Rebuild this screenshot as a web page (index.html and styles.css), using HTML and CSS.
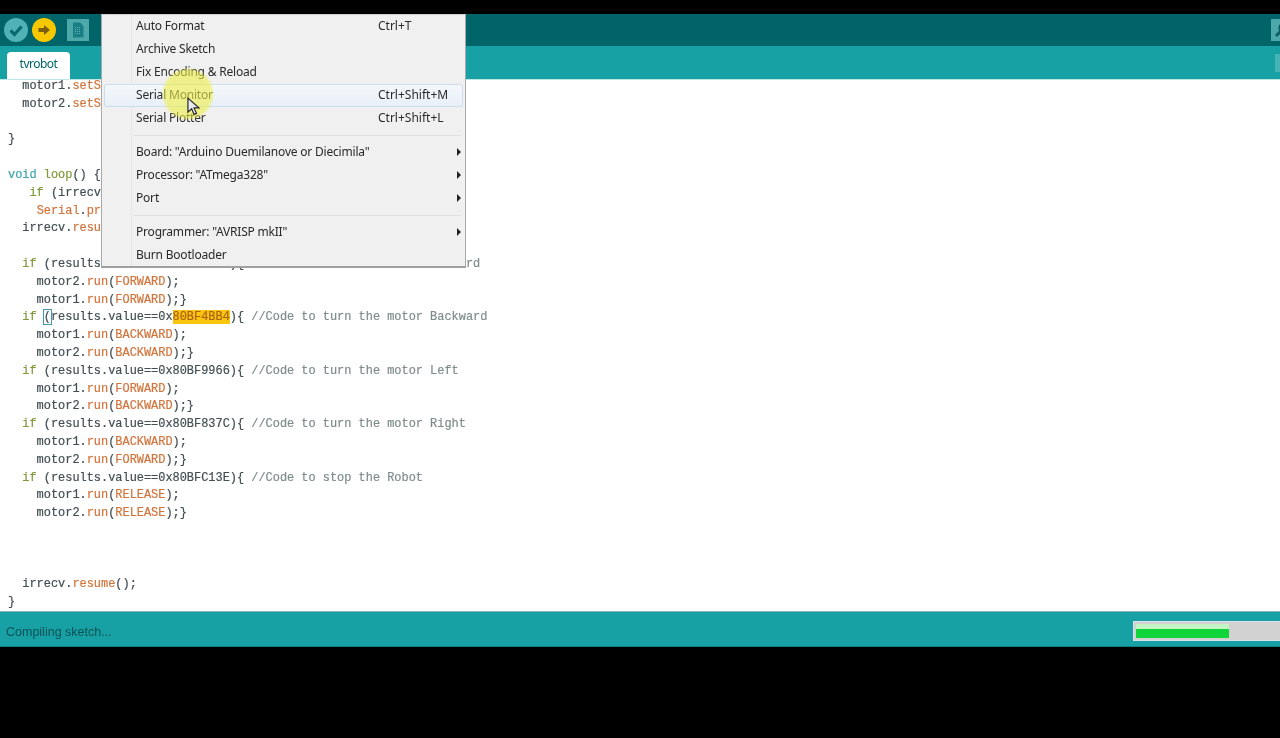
FILE: index.html
```html
<!DOCTYPE html>
<html lang="en">
<head>
<meta charset="utf-8">
<title>tvrobot | Arduino</title>
<link rel="stylesheet" href="styles.css">
</head>
<body>
<div class="app">
  <header class="toolbar">
    <div class="tools">
      <button class="round verify" aria-label="Verify"><svg viewBox="0 0 24 24" width="24" height="24"><path d="M6.5 12.5l4 4 7-8" fill="none" stroke="#0b6a70" stroke-width="3.2"/></svg></button>
      <button class="round upload" aria-label="Upload"><svg viewBox="0 0 24 24" width="24" height="24"><path d="M6.5 10h5.5V7l6 5-6 5v-3H6.5z" fill="#7a5f10"/></svg></button>
      <button class="square new" aria-label="New"><svg viewBox="0 0 22 22" width="22" height="22"><path d="M6 3.5h7l3.5 3.5v11.5H6z" fill="#1a7f84"/><path d="M8 8.5h6M8 10.5h6M8 12.5h6M8 14.5h6" stroke="#5fb0b2" stroke-width="1" stroke-dasharray="1 1"/></svg></button>
    </div>
    <button class="square monitor" aria-label="Serial Monitor"><svg viewBox="0 0 22 22" width="22" height="22"><circle cx="13" cy="9" r="4.5" fill="none" stroke="#0b5f63" stroke-width="2.4"/><path d="M9.5 12.5L5 17" stroke="#0b5f63" stroke-width="3"/></svg></button>
  </header>
  <nav class="tabbar">
    <div class="tab">tvrobot</div>
    <div class="tabmenu"></div>
  </nav>
  <main class="editor">
<pre class="code">  motor1.<span class="fn">setSpeed</span>(200);
  motor2.<span class="fn">setSpeed</span>(200);

}

<span class="ty">void</span> <span class="kw">loop</span>() {
   <span class="kw">if</span> (irrecv.<span class="fn">decode</span>(&amp;results)) {
    <span class="fn">Serial</span>.<span class="fn">println</span>(results.value, HEX);
  irrecv.<span class="fn">resume</span>();

  <span class="kw">if</span> (results.value==0x80BF06F9){ <span class="cm">//Code to turn the motor Forward</span>
    motor2.<span class="fn">run</span>(<span class="fn">FORWARD</span>);
    motor1.<span class="fn">run</span>(<span class="fn">FORWARD</span>);}
  <span class="kw">if</span> <span class="caret">(</span>results.value==0x<mark class="hit">80BF4BB4</mark>){ <span class="cm">//Code to turn the motor Backward</span>
    motor1.<span class="fn">run</span>(<span class="fn">BACKWARD</span>);
    motor2.<span class="fn">run</span>(<span class="fn">BACKWARD</span>);}
  <span class="kw">if</span> (results.value==0x80BF9966){ <span class="cm">//Code to turn the motor Left</span>
    motor1.<span class="fn">run</span>(<span class="fn">FORWARD</span>);
    motor2.<span class="fn">run</span>(<span class="fn">BACKWARD</span>);}
  <span class="kw">if</span> (results.value==0x80BF837C){ <span class="cm">//Code to turn the motor Right</span>
    motor1.<span class="fn">run</span>(<span class="fn">BACKWARD</span>);
    motor2.<span class="fn">run</span>(<span class="fn">FORWARD</span>);}
  <span class="kw">if</span> (results.value==0x80BFC13E){ <span class="cm">//Code to stop the Robot</span>
    motor1.<span class="fn">run</span>(<span class="fn">RELEASE</span>);
    motor2.<span class="fn">run</span>(<span class="fn">RELEASE</span>);}



  irrecv.<span class="fn">resume</span>();
}</pre>
  </main>
  <footer class="status">
    <span class="msg">Compiling sketch...</span>
    <div class="progress"><div class="bar"></div></div>
  </footer>
</div>

<div class="menu">
  <div class="item"><span>Auto Format</span><span class="key">Ctrl+T</span></div>
  <div class="item"><span>Archive Sketch</span></div>
  <div class="item"><span>Fix Encoding &amp; Reload</span></div>
  <div class="item active"><span>Serial Monitor</span><span class="key">Ctrl+Shift+M</span></div>
  <div class="item"><span>Serial Plotter</span><span class="key">Ctrl+Shift+L</span></div>
  <div class="sep"></div>
  <div class="item sub"><span>Board: "Arduino Duemilanove or Diecimila"</span></div>
  <div class="item sub"><span>Processor: "ATmega328"</span></div>
  <div class="item sub"><span>Port</span></div>
  <div class="sep"></div>
  <div class="item sub"><span>Programmer: "AVRISP mkII"</span></div>
  <div class="item"><span>Burn Bootloader</span></div>
</div>

<div class="spot"></div>
<svg class="pointer" viewBox="0 0 14 20" width="13" height="19"><path d="M1 1v15l4-3.5 2.6 6 2.6-1.1-2.6-5.9h5.2z" fill="#e8edf2" stroke="#2a2a2a" stroke-width="1.3"/></svg>
</body>
</html>
```
FILE: styles.css
```css
* { box-sizing: border-box; }
html, body { margin: 0; height: 738px; overflow: hidden; background: #000; }
body { position: relative; }

.app {
  display: flex;
  flex-direction: column;
  height: 738px;
  padding: 14px 0 91px;
  filter: blur(0.4px);
}

.toolbar {
  height: 32px;
  flex: none;
  background: #006468;
  display: flex;
  align-items: center;
  justify-content: space-between;
}
.tools { display: flex; align-items: center; padding-left: 4px; }
button { border: 0; padding: 0; display: flex; align-items: center; justify-content: center; }
.round { width: 24px; height: 24px; border-radius: 50%; margin-right: 4px; }
.verify { background: #4fb3b6; }
.upload { background: #f7c800; }
.square { width: 22px; height: 22px; background: #4da8aa; }
.new { margin-left: 7px; }
.monitor { margin-right: -13px; }

.tabbar {
  height: 33px;
  flex: none;
  background: #17a1a5;
  display: flex;
  align-items: flex-end;
  justify-content: space-between;
  padding-left: 7px;
  position: relative;
}
.tab {
  width: 63px;
  height: 27px;
  background: #fff;
  border-radius: 4px 4px 0 0;
  color: #006468;
  font: 12px/24px "Noto Sans", sans-serif;
  letter-spacing: -0.5px;
  text-align: center;
}
.tabmenu {
  width: 22px;
  height: 18px;
  margin: 0 -17px 7px 0;
  background: #45b3b6;
}

.editor {
  flex: 1;
  min-height: 0;
  background: #fff;
  overflow: hidden;
  border-top: 1px solid #bfe6e7;
}
.code {
  margin: -2px 0 0 8px;
  font: 11.93px/17.8px "Liberation Mono", monospace;
  color: #434f54;
  -webkit-text-stroke: 0.2px currentColor;
}
.fn { color: #d2743c; }
.kw { color: #7f9a3a; }
.ty { color: #3fa5aa; }
.cm { color: #7f8c8d; }
.hit { background: #fbc40f; color: #a8651a; }
.caret { outline: 1px solid #3f97a8; }

.status {
  height: 36px;
  flex: none;
  background: #17a1a5;
  border-top: 1px solid #8fb4b6;
  border-bottom: 1px solid #0f7f82;
  display: flex;
  align-items: center;
  justify-content: space-between;
  padding-left: 6px;
}
.msg { font: 12.5px "Liberation Sans", sans-serif; color: #0c5156; margin-top: 6px; }
.progress {
  width: 147px;
  height: 20px;
  margin-top: 3px;
  background: #d2d2d2;
  border: 1px solid #d5e2ea;
  border-right: 0;
  padding: 2px 0 2px 2px;
}
.bar {
  width: 93px;
  height: 100%;
  background: linear-gradient(#c4f3c4 0 35%, #0fd43a 35% 100%);
}

.menu {
  position: absolute;
  left: 101px;
  top: 14px;
  width: 365px;
  height: 254px;
  padding: 0 2px;
  background: #f0f0f0;
  border: 1px solid #a9a9a9;
  border-top-color: #d0d0d0;
  border-bottom: 2px solid #a0a0a0;
  font: 12px/21px "Noto Sans", sans-serif;
  letter-spacing: -0.2px;
  color: #2a2a2a;
  filter: blur(0.3px);
}
.menu::before {
  content: "";
  position: absolute;
  left: 29px;
  top: 0;
  bottom: 0;
  border-left: 1px solid #e6e6e6;
}
.item {
  position: relative;
  height: 23px;
  padding-left: 32px;
}
.key { position: absolute; left: 274px; top: 0; letter-spacing: 0; }
.active {
  background: linear-gradient(#f5f8fb, #e8eff7);
  border-radius: 3px;
  box-shadow: inset 0 0 0 1px #cddcee;
}
.sub::after {
  content: "";
  position: absolute;
  right: 2px;
  top: 7px;
  border-left: 4px solid #222;
  border-top: 4px solid transparent;
  border-bottom: 4px solid transparent;
}
.sep { height: 11px; margin-left: 29px; position: relative; }
.sep::after {
  content: "";
  position: absolute;
  left: 0;
  right: 2px;
  top: 5px;
  border-top: 1px solid #dfdfdf;
}

.spot {
  position: absolute;
  left: 163px;
  top: 69px;
  width: 50px;
  height: 50px;
  border-radius: 50%;
  background: rgba(238, 238, 70, 0.6);
  filter: blur(1px);
}
.pointer { position: absolute; left: 187px; top: 97px; }
```
